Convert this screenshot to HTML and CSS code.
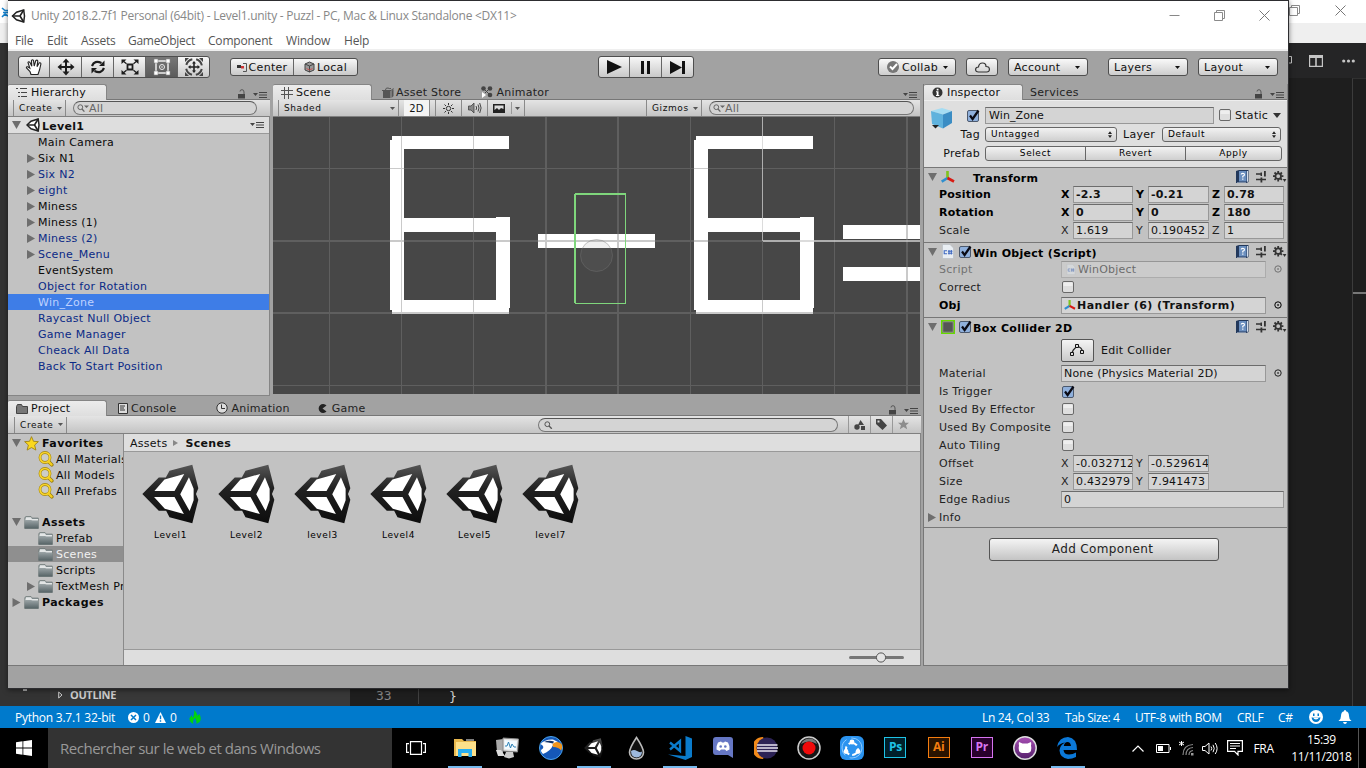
FILE: index.html
```html
<!DOCTYPE html>
<html lang="fr">
<head>
<meta charset="utf-8">
<title>Unity 2018.2.7f1 Personal (64bit) - Level1.unity</title>
<link rel="stylesheet" href="styles.css">
</head>
<body>
<svg class="defs" width="0" height="0">
  <defs>
    <linearGradient id="gDark" x1="0" y1="0" x2="0" y2="1"><stop offset="0" stop-color="#555"/><stop offset=".4" stop-color="#222"/><stop offset="1" stop-color="#0d0d0d"/></linearGradient>
    <linearGradient id="gFolder" x1="0" y1="0" x2="0" y2="1"><stop offset="0" stop-color="#9ba4a6"/><stop offset="1" stop-color="#566366"/></linearGradient>
    <linearGradient id="gGh" x1="0" y1="0" x2="0" y2="1"><stop offset="0" stop-color="#a84fb4"/><stop offset="1" stop-color="#54206b"/></linearGradient>
    <symbol id="unity" viewBox="36 192 170 178">
      <path fill="url(#gDark)" d="M37 281 86 232H107L118 212 186 194 204 264 197 281 204 298 186 368 118 350 108 331H86Z"/>
      <path fill="#fff" d="M73 272 103 238 162 221 133 272ZM72 290H133L161 341 104 325ZM176 231 190 265V300L178 332 150 282Z"/>
    </symbol>
    <symbol id="unityline" viewBox="0 0 14 14">
      <path fill="#fff" stroke="#222" stroke-width="1.5" d="M1 7 5 3.2 12.2 1 13 7 12.2 13 5 10.8Z"/>
      <path fill="none" stroke="#222" stroke-width="1.6" d="M1 7H8.5L12.2 1M8.5 7 12.2 13"/>
    </symbol>
    <symbol id="right" viewBox="0 0 8 9"><path fill="#6e6e6e" d="M0 0 8 4.5 0 9Z"/></symbol>
    <symbol id="down" viewBox="0 0 9 8"><path fill="#6e6e6e" d="M0 0H9L4.5 8Z"/></symbol>
    <symbol id="drop" viewBox="0 0 5 3"><path fill="currentColor" d="M0 0H5L2.5 3Z"/></symbol>
    <symbol id="menu" viewBox="0 0 14 7"><path fill="#444" d="M0 1H5L2.5 4ZM6 0H14V1H6ZM6 2.500H14V3.500H6ZM6 5H14V6H6Z"/></symbol>
    <symbol id="lock" viewBox="0 0 8 10"><path fill="#444" d="M0 5H7V9.500H0Z"/><path fill="none" stroke="#555" d="M2 2.500Q2 .7 4 .7T6 3V5"/></symbol>
    <symbol id="glass" viewBox="0 0 12 8"><circle cx="3.300" cy="3.200" r="2.400" fill="none" stroke="#666"/><path stroke="#666" stroke-width="1.300" d="M5 5 7.400 7.600"/><path fill="#666" d="M7 1.500H12L9.500 4Z"/></symbol>
    <symbol id="folder" viewBox="0 0 15 13"><path fill="#8d979a" stroke="#65706f" stroke-width=".6" d="M.8 3V1.500L2 .5H7L8 2H14.300V12.500H.8Z"/><path fill="#e3e6e6" d="M2 1.300H7L8 3H14V4.500H1.200Z"/><path fill="url(#gFolder)" d="M.5 4H7L8.500 5H14.500V12.500H.5Z"/></symbol>
    <symbol id="yglass" viewBox="0 0 16 16"><path fill="none" stroke="#94780c" stroke-width="3.600" stroke-linecap="round" d="M10.500 10.500 13.800 13.800"/><circle cx="7" cy="6.500" r="5" fill="#cdcdc6" stroke="#a4860e" stroke-width="2.800"/><circle cx="7" cy="6.500" r="5" fill="none" stroke="#f7d42c" stroke-width="1.700"/><path fill="none" stroke="#f5cf1e" stroke-width="2.200" stroke-linecap="round" d="M10.700 10.700 13.600 13.600"/></symbol>
    <symbol id="axes" viewBox="0 0 14 12"><path fill="none" stroke="#7fc41c" stroke-width="2.600" d="M6.500 0V7"/><path stroke="#2f8fcf" stroke-width="2.600" d="M6.500 7 .7 10.700"/><path stroke="#d81a12" stroke-width="2.600" d="M6.500 7 13 10.500"/></symbol>
    <symbol id="book" viewBox="0 0 13 13"><path fill="#23395c" d="M0 1 3 0H12.500V12L10.500 13H0Z"/><path fill="#6b8fbf" d="M3 1H10.500V11.500H3Z"/><path fill="#d5deea" d="M11 1H12V11.500L11 12ZM1 12H10V12.600H1Z"/><path fill="none" stroke="#fff" stroke-width="1.200" d="M5.200 4.600Q5.200 3.300 6.800 3.300T8.400 4.700Q8.400 5.600 6.800 6.200V7.400M6.800 8.500V9.700"/></symbol>
    <symbol id="sliders" viewBox="0 0 12 12"><path fill="#333" d="M1 2.300H7V3.700H1ZM1 7.800H11V9.200H1ZM5.500 6.500H7.300V11.500H5.500ZM5.500 1.500H7V5H5.500ZM9 0H10.800V5.500H9Z"/></symbol>
    <symbol id="gear" viewBox="0 0 14 12"><circle cx="5.200" cy="5.200" r="2.800" fill="none" stroke="#333" stroke-width="1.800"/><path stroke="#333" stroke-width="1.800" d="M5.200 0V2M5.200 8.400V10.400M0 5.200H2M8.400 5.200H10.400M1.500 1.500 3 3M7.400 7.400 8.900 8.900M8.900 1.500 7.400 3M3 7.400 1.500 8.900"/><path fill="#333" d="M9.800 8H13.400L11.600 11Z"/></symbol>
    <symbol id="check" viewBox="0 0 13 13"><rect x=".5" y="1.500" width="11" height="11" rx="1.500" fill="#8fb0dc" stroke="#4c596d"/><path fill="none" stroke="#0a0a14" stroke-width="2.200" d="M3 6.500 5.600 10 11.500 1.500"/></symbol>
    <symbol id="box" viewBox="0 0 13 13"><rect x=".5" y=".5" width="11" height="11" rx="1.500" fill="#dedede" stroke="#696969"/><path fill="#eee" d="M1.500 1.500H10.500V5H1.500Z"/></symbol>
    <symbol id="pick" viewBox="0 0 9 9"><circle cx="4" cy="4" r="3.200" fill="none" stroke="currentColor"/><path fill="currentColor" d="M3.300 3.300H4.800V4.800H3.300Z"/></symbol>
    <symbol id="script" viewBox="0 0 12 15"><path fill="#e9eef3" stroke="#b6bcc3" stroke-width=".6" d="M.5.5H8L11.500 4V14.500H.5Z"/><path fill="none" stroke="#3e68c0" stroke-width="1.100" d="M5 6.700H2.200V9.800H5M7 6V10.500M9.300 6V10.500M5.900 7.300H10.500M5.900 9.200H10.500"/></symbol>
    <symbol id="updn" viewBox="0 0 4 7"><path fill="#222" d="M0 3 2 .3 4 3ZM0 4.200H4L2 7Z"/></symbol>
    <symbol id="restore" viewBox="0 0 11 11"><path fill="none" stroke="#8a8a8a" d="M.5 2.500H8.500V10.500H.5ZM2.500 2.500V.5H10.500V8.500H8.500"/></symbol>
    <symbol id="close" viewBox="0 0 11 11"><path stroke="#777" d="M.5.5 10.500 10.500M10.500.5.5 10.500"/></symbol>
  </defs>
</svg>

<div class="desktop">
  <div class="vscode">
    <div class="vs-title"><svg class="vs-logo" width="8" height="11" viewBox="0 0 8 11"><path fill="none" stroke="#1583cf" stroke-width="1.600" d="M2 1 5 3.500H8M2 10 5 7 8 9M3 5.500H8"/></svg><svg width="11" height="11"><use href="#restore"/></svg><svg class="vs-close" width="11" height="11"><use href="#close"/></svg></div>
    <div class="vs-menu"></div>
    <div class="vs-body">
      <div class="vs-activity"><i></i></div>
      <div class="vs-side"><svg width="5" height="8" viewBox="0 0 5 8"><path fill="none" stroke="#ccc" d="M.7 1V7L4 4Z"/></svg><span>OUTLINE</span></div>
      <div class="vs-code"><span class="ln">33</span><span class="brace">}</span></div>
      <div class="vs-right"><div class="vs-actions">
        <svg width="7" height="14" viewBox="0 0 7 14"><path fill="none" stroke="#c5c5c5" d="M0 2.500H2.500V9H0"/></svg>
        <svg width="14" height="12" viewBox="0 0 14 12"><path fill="#c5c5c5" d="M0 0H14V12H0ZM1.200 3V10.800H6.200V3ZM7.800 3V10.800H12.800V3Z" fill-rule="evenodd"/></svg>
        <svg width="13" height="4" viewBox="0 0 13 4"><g fill="#c5c5c5"><circle cx="1.700" cy="2" r="1.600"/><circle cx="6.500" cy="2" r="1.600"/><circle cx="11.300" cy="2" r="1.600"/></g></svg>
      </div><div class="vs-map"><i></i></div></div>
    </div>
    <div class="vs-status">
      <span class="s1">Python 3.7.1 32-bit</span>
      <svg width="11" height="11" viewBox="0 0 11 11"><circle cx="5.500" cy="5.500" r="5.500" fill="#fff"/><path stroke="#007acc" stroke-width="1.500" d="M3 3 8 8M8 3 3 8"/></svg><span class="s2">0</span>
      <svg width="11" height="11" viewBox="0 0 11 11"><path fill="#fff" d="M5.500 0 11 11H0Z"/><path stroke="#007acc" stroke-width="1.400" d="M5.500 3.500V7.300M5.500 8.300V9.700"/></svg><span class="s3">0</span>
      <svg width="12" height="14" viewBox="0 0 12 14"><path fill="#00d50d" d="M5 0Q9 3 8 6L10.500 4Q13 9 10.500 12L7.500 14Q8 11 6 8Q3 11 4.500 14Q0 12 .5 8L3 5V8Q6 5 5 0Z"/></svg>
      <span class="s4">Ln 24, Col 33</span><span class="s5">Tab Size: 4</span><span class="s6">UTF-8 with BOM</span><span class="s7">CRLF</span><span class="s8">C#</span>
      <svg width="14" height="14" viewBox="0 0 14 14"><circle cx="7" cy="7" r="7" fill="#fff"/><path fill="#007acc" d="M4 3.500H5.500V6H4ZM8.500 3.500H10V6H8.500ZM2.500 7.500H11.500Q10.500 12 7 12T2.500 7.500Z"/><path fill="#fff" d="M4 7.400H10Q9 9.500 7 9.500T4 7.400Z"/></svg>
      <svg class="bell" width="14" height="14" viewBox="0 0 14 14"><path fill="#fff" d="M7 0Q8 0 8 1.300Q11 2 11 6Q11 9.500 13.500 11H.5Q3 9.500 3 6Q3 2 6 1.300Q6 0 7 0ZM5 12H9Q8.500 14 7 14T5 12Z"/></svg>
    </div>
  </div>

  <div class="taskbar">
    <div class="start"><svg width="16" height="16" viewBox="0 0 16 16"><path fill="#fff" d="M0 2.300 6.500 1.300V7.600H0ZM7.300 1.200 16 0V7.600H7.300ZM0 8.400H6.500V14.700L0 13.700ZM7.300 8.400H16V16L7.300 14.800Z"/></svg></div>
    <div class="tsearch">Rechercher sur le web et dans Windows</div>
    <div class="apps">
      <div class="app first"><svg width="20" height="14" viewBox="0 0 20 14"><path fill="none" stroke="#fff" stroke-width="1.200" d="M4.500.6H15.500V13.400H4.500ZM3 2.600H.6V11.400H3M17 2.600H19.400V11.400H17"/></svg></div>
      <div class="app on"><svg width="22" height="20" viewBox="0 0 22 20"><path fill="#e8b84e" d="M0 1H8L10 3H22V18H0Z"/><path fill="#fde08a" d="M2 4H22V18H2Z"/><path fill="#28aef0" d="M4 11H18V19H14.500V15H7.500V19H4Z"/><path fill="#fff" d="M12 1.500H20V2.500H12Z"/></svg></div>
      <div class="app"><svg width="24" height="22" viewBox="0 0 24 22"><path fill="#aaa" d="M0 3 7 2V16L1 15Z"/><path fill="#e4e4e4" stroke="#888" d="M7 1 22.500 2 21.500 15 7 14Z"/><path fill="#f3fbff" d="M8.500 3 21 4 20 13 8.500 12Z"/><path fill="none" stroke="#2f82b6" d="M9 9H11L12.500 5 14.500 11 16 7 18 10H20"/><path fill="#ccc" d="M10 15H17L18 20 13 21.500 8 20Z"/><path fill="#ddd" d="M0 13H5L9 19H2Z"/></svg></div>
      <div class="app"><svg width="24" height="24" viewBox="0 0 24 24"><circle cx="12" cy="12" r="11.500" fill="#1558b8" stroke="#4aa4ef"/><path fill="#fff" d="M1.500 8Q6 3 14 3.500L19 6Q15 7 13.500 10Q12 14.500 4 18Q1.500 15.500 2 14Q7 11 1.500 8Z"/><path fill="#0d2f66" d="M5 6Q10 4 15 5.500L14 7.500Q9 6 5 6Z"/><path fill="#f0951c" d="M13.500 8Q18 4 22.500 8Q24 11 22 14.500Q20 11 14 11Z"/></svg></div>
      <div class="app on"><svg width="19" height="20"><use href="#unity"/></svg></div>
      <div class="app"><svg width="17" height="24" viewBox="0 0 17 24"><path fill="#111" stroke="#bbb" stroke-width="1.600" d="M8.500 1.500Q15.500 12 15.500 16.500A7 6.500 0 0 1 1.500 16.500Q1.500 12 8.500 1.500Z"/><path fill="#9db9de" d="M3 15Q6 13 9 15T14 15.500Q14 21 8.500 21.500Q3 21 3 15Z"/></svg></div>
      <div class="app on"><svg width="24" height="24" viewBox="0 0 24 24"><path fill="#0a7bcb" d="M17.500 0 24 2.500V21L17.500 24 0 18.500 17.500 20Z"/><path fill="none" stroke="#0a7bcb" stroke-width="2.300" d="M2 6.500 12 15V5L2 13.500"/></svg></div>
      <div class="app"><svg width="20" height="21" viewBox="0 0 20 21"><path fill="#6677c4" d="M3 0H17Q20 0 20 3V21L15 18H3Q0 18 0 15V3Q0 0 3 0Z"/><path fill="#fff" d="M5 5.500 8 4.500 9 5.500H11L12 4.500 15 5.500Q17 9 16.500 12.500L13.500 14 12 12.500H8L6.500 14 3.500 12.500Q3 9 5 5.500Z"/><circle cx="7.700" cy="9.500" r="1.300" fill="#6677c4"/><circle cx="12.300" cy="9.500" r="1.300" fill="#6677c4"/></svg></div>
      <div class="app"><svg width="24" height="22" viewBox="0 0 24 22"><path fill="#f28a1a" d="M9 0A11 11 0 0 0 9 22L10 20A10 10 0 0 1 10 2Z"/><circle cx="13" cy="11" r="10.500" fill="#2c2255"/><path stroke="#e8e3f0" stroke-width="1.600" d="M3 8H23.500M3 11H24M3 14H23.500"/></svg></div>
      <div class="app"><svg width="24" height="24" viewBox="0 0 24 24"><circle cx="12" cy="12" r="11" fill="#161616" stroke="#ccc" stroke-width="1.500"/><path fill="#777" d="M4 8Q6 3 12 2.500T20 8Q12 3 4 8Z"/><circle cx="12" cy="12" r="6.500" fill="#f00a0a"/></svg></div>
      <div class="app"><svg width="24" height="24" viewBox="0 0 24 24"><rect width="24" height="24" rx="6" fill="#2a93ef"/><circle cx="12" cy="12" r="10" fill="none" stroke="#8fcbff" stroke-dasharray="18 5"/><circle cx="12" cy="13" r="6" fill="none" stroke="#fff" stroke-width="2" stroke-dasharray="9 3"/><g fill="#fff"><circle cx="12" cy="6" r="2.400"/><circle cx="6" cy="15.500" r="2.400"/><circle cx="18" cy="15.500" r="2.400"/></g></svg></div>
      <div class="app"><b class="adobe ps">Ps</b></div>
      <div class="app"><b class="adobe ai">Ai</b></div>
      <div class="app"><b class="adobe pr">Pr</b></div>
      <div class="app"><svg width="24" height="24" viewBox="0 0 24 24"><circle cx="12" cy="12" r="11.200" fill="url(#gGh)" stroke="#ddd" stroke-width="1.500"/><path fill="#fff" d="M6 6 9.500 7.500H14.500L18 6Q18.500 8 18 9.500Q19.500 16 15 17H9Q4.500 16 6 9.500Q5.500 8 6 6Z"/></svg></div>
      <div class="app on"><svg width="21" height="22" viewBox="0 0 21 22"><path fill="#0b78d7" d="M0 10Q2 0 11 0Q20 1 20 13H6.500Q7 17.500 12 17.500Q16 17.500 19 15.500V20Q15 22 11 22Q3 21 2.500 13.500Q3 8 8 5.500Q3 6 0 10ZM6.800 9H14Q13.500 5 10.500 5T6.800 9Z"/></svg></div>
    </div>
    <div class="tray">
      <svg width="12" height="7" viewBox="0 0 12 7"><path fill="none" stroke="#fff" stroke-width="1.200" d="M.5 6.500 6 1 11.500 6.500"/></svg>
      <svg width="15" height="9" viewBox="0 0 15 9"><path fill="none" stroke="#fff" d="M.5.5H13V8.500H.5ZM14.500 3V6"/><path fill="#fff" d="M2 2H7V7H2Z"/></svg>
      <svg width="15" height="15" viewBox="0 0 15 15"><path stroke="#fff" d="M2.500 0V5M0 1 5 4M5 1 0 4"/><g fill="none" stroke="#888" stroke-width="1.200"><path d="M4 14Q4 4 14 3.500M7 14Q7 7 14 6.500M10 14Q10 10 14 9.500"/></g><path fill="#999" d="M12 12H14.500V14.500H12Z"/></svg>
      <svg width="17" height="13" viewBox="0 0 17 13"><path fill="none" stroke="#fff" d="M.5 4.500H3L7 1V12L3 8.500H.5ZM9 4.500Q10.500 6.500 9 8.500M11 2.800Q13.500 6.500 11 10.200M13.200 1Q17 6.500 13.200 12"/></svg>
      <svg width="16" height="16" viewBox="0 0 16 16"><path fill="none" stroke="#fff" stroke-width="1.200" d="M.6.600H15.400V11.400H11V15L7.500 11.400H.6ZM3 3.500H13M3 6H13M3 8.500H9"/></svg>
      <span class="lang">FRA</span>
      <div class="clock"><span>15:39</span><span class="date">11/11/2018</span></div>
      <i class="peek"></i>
    </div>
  </div>

  <div class="unity">
    <div class="u-title"><svg width="15" height="14"><use href="#unityline"/></svg><span>Unity 2018.2.7f1 Personal (64bit) - Level1.unity - Puzzl - PC, Mac &amp; Linux Standalone &lt;DX11&gt;</span>
      <div class="winbtns"><svg width="11" height="11" viewBox="0 0 11 11"><path stroke="#888" d="M.5 5.500H10.500"/></svg><svg width="11" height="11"><use href="#restore"/></svg><svg width="11" height="11"><use href="#close"/></svg></div></div>
    <div class="u-menu"><span>File</span><span>Edit</span><span>Assets</span><span>GameObject</span><span>Component</span><span>Window</span><span>Help</span></div>

    <div class="u-tools">
      <div class="bgroup tools">
        <div><svg width="18" height="18" viewBox="0 0 18 18"><path fill="#fff" stroke="#222" stroke-width="1.100" d="M6 16.500 5 13.500 1.500 10Q1 8.500 2.700 8.700L4.800 10.200 3 4.500Q3.500 3 5 4.500L6.800 8.300 6.500 2.500Q7.500 1 8.500 2.500L9.200 8 10.800 2.500Q12.200 1.500 12.800 3L12 8.700 14.300 4.700Q15.800 4.500 15.900 6L14.500 12 13 16.500Z"/></svg></div>
        <div><svg width="18" height="18" viewBox="0 0 18 18"><path fill="#1c1c1c" d="M9 .5 12.500 4.500H10V8H13.500V5.500L17.500 9 13.500 12.500V10H10V13.500H12.500L9 17.500 5.500 13.500H8V10H4.500V12.500L.5 9 4.500 5.500V8H8V4.500H5.500Z"/></svg></div>
        <div><svg width="16" height="16" viewBox="0 0 16 16"><path fill="none" stroke="#1c1c1c" stroke-width="2.200" d="M2 7Q4.500 .8 11.500 4M14 9Q11.500 15.200 4.500 12"/><path fill="#1c1c1c" d="M14.500 1.500V7H9ZM1.500 14.500V9H7Z"/></svg></div>
        <div><svg width="18" height="16" viewBox="0 0 18 16"><path fill="none" stroke="#1c1c1c" stroke-width="1.800" d="M6.500 5.500H11.500V10.500H6.500Z"/><path stroke="#1c1c1c" stroke-width="1.300" d="M1.500 1.500 5.500 4.700M16.500 1.500 12.500 4.700M1.500 14.500 5.500 11.300M16.500 14.500 12.500 11.300"/><path fill="#1c1c1c" d="M.5.5H5.500L.5 5ZM17.500.5H12.500L17.500 5ZM.5 15.500H5.500L.5 11ZM17.500 15.500H12.500L17.500 11Z"/></svg></div>
        <div class="sel"><svg width="18" height="18" viewBox="0 0 18 18"><path fill="none" stroke="#eee" stroke-width="1.500" d="M3 3H15V15H3Z"/><path fill="#fff" stroke="#888" stroke-width=".6" d="M1 1H5V5H1ZM13 1H17V5H13ZM1 13H5V17H1ZM13 13H17V17H13Z"/><circle cx="9" cy="9" r="2.500" fill="none" stroke="#eee"/><circle cx="9" cy="9" r=".8" fill="#eee"/></svg></div>
        <div><svg width="20" height="20" viewBox="0 0 20 20"><circle cx="10" cy="10" r="8" fill="none" stroke="#444" stroke-width="2" stroke-dasharray="8.600 3.966" stroke-dashoffset="-2"/><path fill="#444" d="M1 1H5L1 5ZM19 1H15L19 5ZM1 19H5L1 15ZM19 19H15L19 15Z"/><path fill="#222" d="M10 4 12 6.500H10.800V9.200H13.500V8L16 10 13.500 12V10.800H10.800V13.500H12L10 16 8 13.500H9.200V10.800H6.500V12L4 10 6.500 8V9.200H9.200V6.500H8Z"/></svg></div>
      </div>
      <div class="bgroup pivot">
        <div><svg width="10" height="9" viewBox="0 0 10 9"><path fill="#333" d="M0 2H4V5H0Z"/><path fill="none" stroke="#555" d="M6 .5H9.500V8.500H6"/><path fill="#c33" d="M4 3H7V5.500H4Z"/></svg>Center</div>
        <div><svg width="11" height="12" viewBox="0 0 11 12"><path fill="#999" stroke="#444" d="M1 3 5.500 1 10 3V9L5.500 11 1 9Z"/><path fill="none" stroke="#444" d="M1 3 5.500 5 10 3M5.500 5V11"/><path fill="none" stroke="#c55" d="M2.500 7.500 5.500 9 8.500 7.500"/></svg>Local</div>
      </div>
      <div class="bgroup play">
        <div><svg width="15" height="14" viewBox="0 0 15 14"><path fill="#111" d="M0 0 15 7 0 14Z"/></svg></div>
        <div><svg width="9" height="13" viewBox="0 0 9 13"><path fill="#111" d="M0 0H3V13H0ZM6 0H9V13H6Z"/></svg></div>
        <div><svg width="15" height="13" viewBox="0 0 15 13"><path fill="#111" d="M0 0 12 6.500V0H15V13H12V6.500L0 13Z"/></svg></div>
      </div>
      <div class="rbtns">
        <div class="btn w77"><svg width="12" height="12" viewBox="0 0 12 12"><circle cx="6" cy="6" r="6" fill="#777"/><path fill="none" stroke="#fff" stroke-width="2" d="M3 5.500 5.500 8 10 3"/></svg>Collab<svg class="dd" width="5" height="3"><use href="#drop"/></svg></div>
        <div class="btn w31"><svg width="15" height="11" viewBox="0 0 15 11"><path fill="none" stroke="#333" stroke-width="1.200" d="M3.500 10Q.6 10 .6 7.500T3.500 5Q4 1 7.500 1T11 4.500Q14.400 4.500 14.400 7.300T11.500 10Z"/></svg></div>
        <div class="btn w79">Account<svg class="dd" width="5" height="3"><use href="#drop"/></svg></div>
        <div class="btn w79 gap">Layers<svg class="dd" width="5" height="3"><use href="#drop"/></svg></div>
        <div class="btn w79">Layout<svg class="dd" width="5" height="3"><use href="#drop"/></svg></div>
      </div>
    </div>

    <div class="work">
      <div class="leftcol">
        <div class="toprow">
          <section class="hier">
            <div class="tabs"><div class="tab act"><svg width="12" height="9" viewBox="0 0 12 9"><path stroke="#444" fill="none" d="M0 .5H2M4 .5H11M2 4.500H4M5 4.500H11M2 8.500H4M5 8.500H11"/></svg>Hierarchy</div><div class="tabend"><svg width="8" height="10"><use href="#lock"/></svg><svg width="14" height="7"><use href="#menu"/></svg></div></div>
            <div class="bar hbar"><div class="create">Create<svg width="5" height="3"><use href="#drop"/></svg></div><div class="search"><svg width="12" height="8"><use href="#glass"/></svg>All</div></div>
            <div class="tree">
              <div class="scenehd"><svg width="9" height="8"><use href="#down"/></svg><svg width="14" height="14"><use href="#unityline"/></svg><b>Level1</b><svg class="mr" width="14" height="7"><use href="#menu"/></svg></div>
              <div class="row"><i></i>Main Camera</div>
              <div class="row"><svg width="8" height="9"><use href="#right"/></svg>Six N1</div>
              <div class="row blue"><svg width="8" height="9"><use href="#right"/></svg>Six N2</div>
              <div class="row blue"><svg width="8" height="9"><use href="#right"/></svg>eight</div>
              <div class="row"><svg width="8" height="9"><use href="#right"/></svg>Miness</div>
              <div class="row"><svg width="8" height="9"><use href="#right"/></svg>Miness (1)</div>
              <div class="row blue"><svg width="8" height="9"><use href="#right"/></svg>Miness (2)</div>
              <div class="row blue"><svg width="8" height="9"><use href="#right"/></svg>Scene_Menu</div>
              <div class="row"><i></i>EventSystem</div>
              <div class="row blue"><i></i>Object for Rotation</div>
              <div class="row picked"><i></i>Win_Zone</div>
              <div class="row blue"><i></i>Raycast Null Object</div>
              <div class="row blue"><i></i>Game Manager</div>
              <div class="row blue"><i></i>Cheack All Data</div>
              <div class="row blue"><i></i>Back To Start Position</div>
            </div>
          </section>
          <section class="scene">
            <div class="tabs"><div class="tab act"><svg width="12" height="12" viewBox="0 0 12 12"><path stroke="#555" d="M3.500 0V12M7.500 0V12M0 3.500H12M0 7.500H12"/></svg>Scene</div>
              <div class="tab t-store"><svg width="12" height="11" viewBox="0 0 12 11"><path fill="#555" d="M1 4H8.500V11H1ZM9.500 4 11.500 2V9L9.500 11Z"/><path fill="none" stroke="#555" d="M3 4Q4 0 6 1T9 1.500M0 3.500H9L11.500 1.500"/></svg>Asset Store</div>
              <div class="tab t-anim"><svg width="12" height="12" viewBox="0 0 12 12"><g fill="#444"><circle cx="2.500" cy="2.500" r="2.300"/><circle cx="9" cy="2.500" r="2.300"/><circle cx="9" cy="9" r="2.300"/></g><path stroke="#444" d="M2 2 9 9M9 2 4 7"/><path fill="#fff" d="M1 6 5 9 1 12Z"/></svg>Animator</div>
              <div class="tabend"><svg width="14" height="7"><use href="#menu"/></svg></div></div>
            <div class="bar sbar">
              <div class="c-shade">Shaded<svg width="5" height="3"><use href="#drop"/></svg></div>
              <div class="c-2d">2D</div>
              <div class="c-ic"><svg width="11" height="11" viewBox="0 0 11 11"><circle cx="5.500" cy="5.500" r="2.200" fill="none" stroke="#333"/><path stroke="#333" d="M5.500 0V2M5.500 9V11M0 5.500H2M9 5.500H11M1.500 1.500 3 3M8 8 9.500 9.500M9.500 1.500 8 3M3 8 1.500 9.500"/></svg></div>
              <div class="c-ic"><svg width="14" height="12" viewBox="0 0 14 12"><path fill="#888" stroke="#444" stroke-width=".8" d="M.5 4H3L6 1V11L3 8H.5Z"/><path fill="none" stroke="#444" d="M8 4Q9.300 6 8 8M10 2.500Q12 6 10 9.500M11.700 1Q14.500 6 11.700 11"/></svg></div>
              <div class="c-pic"><svg width="12" height="9" viewBox="0 0 12 9"><rect width="12" height="9" fill="#222"/><path fill="#ddd" d="M1.500 1.500H10.500V5L8 4 6 6 4 4 1.500 6Z"/></svg><i></i><svg width="5" height="3"><use href="#drop"/></svg></div>
              <div class="c-giz">Gizmos<svg width="5" height="3"><use href="#drop"/></svg></div>
              <div class="search"><svg width="12" height="8"><use href="#glass"/></svg>All</div>
            </div>
            <svg class="view" width="647" height="277" viewBox="273 117 647 277" shape-rendering="crispEdges">
              <rect x="273" y="117" width="647" height="277" fill="#474747"/>
              <g fill="#fff">
                <path id="six" d="M392 136H509V149H404V218H496V217H510V308H509V314H392V310H390V140H392ZM404 232V300H496V232Z" fill-rule="evenodd"/>
                <use href="#six" x="304"/>
                <path d="M538 234H655V248H538ZM843 225H920V239H843ZM843 267H920V281H843Z"/>
              </g>
              <path fill="#808080" fill-opacity=".42" d="M329 117h1v277h-1ZM401 117h1v277h-1ZM473 117h1v277h-1ZM545 117h2v277h-2ZM617 117h2v277h-2ZM690 117h1v277h-1ZM762 241h1v153h-1ZM834 117h1v277h-1ZM906 117h2v277h-2ZM273 168h647v1h-647ZM273 240h489v2h-489ZM273 312h647v2h-647ZM273 385h647v1h-647Z"/>
              <path fill="#d0d0d0" fill-opacity=".75" d="M762 117h1v124h-1ZM763 240h157v2h-157Z"/>
              <path fill="none" stroke="#7fd67c" d="M575.500 194V303.500H625.500V194"/><path fill="#7fd67c" d="M575 193h51v2h-51ZM574 194h2v109h-2Z"/>
              <circle cx="596.500" cy="255.500" r="16" fill="#808080" fill-opacity=".12" stroke="#777" stroke-opacity=".4" shape-rendering="auto"/>
            </svg>
          </section>
        </div>

        <section class="proj">
          <div class="tabs"><div class="tab act"><svg width="12" height="10" viewBox="0 0 12 10"><path fill="#777" stroke="#444" d="M.5 2.500 1.500.5H5.500L6.500 2.500H11.500V9.500H.5Z"/></svg>Project</div>
            <div class="tab p2"><svg width="10" height="11" viewBox="0 0 10 11"><path fill="#ddd" stroke="#333" d="M.5.5H9.500V10.500H.5ZM2 3H7M2 5H6M2 7H7"/></svg>Console</div>
            <div class="tab p3"><svg width="12" height="12" viewBox="0 0 12 12"><circle cx="6" cy="6" r="5.200" fill="#ddd" stroke="#333"/><path fill="none" stroke="#333" d="M5.500 2.500V6.500H9"/></svg>Animation</div>
            <div class="tab p4"><svg width="9" height="9" viewBox="0 0 9 9"><path fill="#222" d="M8.500 1.500 4.500 4.500 8.500 7.500A4.500 4.500 0 1 1 8.500 1.500Z"/></svg>Game</div>
            <div class="tabend"><svg width="8" height="10"><use href="#lock"/></svg><svg width="14" height="7"><use href="#menu"/></svg></div></div>
          <div class="bar pbar"><div class="create">Create<svg width="5" height="3"><use href="#drop"/></svg></div><div class="search"><svg width="9" height="8" viewBox="0 0 9 8"><circle cx="3.300" cy="3.200" r="2.400" fill="none" stroke="#555"/><path stroke="#555" stroke-width="1.300" d="M5 5 7.800 7.800"/></svg></div>
            <div class="pi"><svg width="11" height="10" viewBox="0 0 11 10"><path fill="#444" d="M6.500 0 10 5H4ZM7 6H11V10H7Z"/><circle cx="3" cy="7" r="2.700" fill="#444"/></svg></div>
            <div class="pi"><svg width="11" height="11" viewBox="0 0 11 11"><path fill="#444" d="M0 0H5L11 6.500 6.500 11 0 5ZM1.500 1.500V3.500H3.500V1.500Z" fill-rule="evenodd"/></svg></div>
            <div class="pi"><svg width="11" height="11" viewBox="0 0 24 24"><path fill="#8d8d8d" d="M12 0 15.500 8H24L17.500 13.500 20 22.500 12 17.500 4 22.500 6.500 13.500 0 8H8.500Z"/></svg></div></div>
          <div class="pmain">
            <div class="ptree">
              <div class="prow l0"><svg width="9" height="8"><use href="#down"/></svg><svg width="15" height="15" viewBox="0 0 24 24"><path fill="#fbd81f" stroke="#a1861c" stroke-width="1.500" d="M12 1 15.200 8.500 23 9 17 14.500 19 22.500 12 18.500 5 22.500 7 14.500 1 9 8.800 8.500Z"/></svg><b>Favorites</b></div>
              <div class="prow l1"><svg width="16" height="16"><use href="#yglass"/></svg>All Materials</div>
              <div class="prow l1"><svg width="16" height="16"><use href="#yglass"/></svg>All Models</div>
              <div class="prow l1"><svg width="16" height="16"><use href="#yglass"/></svg>All Prefabs</div>
              <div class="spacer"></div>
              <div class="prow l0"><svg width="9" height="8"><use href="#down"/></svg><svg width="15" height="13"><use href="#folder"/></svg><b>Assets</b></div>
              <div class="prow l1"><svg width="15" height="13"><use href="#folder"/></svg>Prefab</div>
              <div class="prow l1 cur"><svg width="15" height="13"><use href="#folder"/></svg>Scenes</div>
              <div class="prow l1"><svg width="15" height="13"><use href="#folder"/></svg>Scripts</div>
              <div class="prow l1 arrow"><svg width="8" height="9"><use href="#right"/></svg><svg width="15" height="13"><use href="#folder"/></svg>TextMesh Pro</div>
              <div class="prow l0"><svg width="8" height="9"><use href="#right"/></svg><svg width="15" height="13"><use href="#folder"/></svg><b>Packages</b></div>
            </div>
            <div class="pfiles">
              <div class="crumb"><span>Assets</span><svg width="5" height="6" viewBox="0 0 5 6"><path fill="#888" d="M0 0 5 3 0 6Z"/></svg><b>Scenes</b></div>
              <div class="files">
                <div><svg width="57" height="60"><use href="#unity"/></svg><span>Level1</span></div>
                <div><svg width="57" height="60"><use href="#unity"/></svg><span>Level2</span></div>
                <div><svg width="57" height="60"><use href="#unity"/></svg><span>level3</span></div>
                <div><svg width="57" height="60"><use href="#unity"/></svg><span>Level4</span></div>
                <div><svg width="57" height="60"><use href="#unity"/></svg><span>Level5</span></div>
                <div><svg width="57" height="60"><use href="#unity"/></svg><span>level7</span></div>
              </div>
              <div class="pfoot"><svg width="55" height="11" viewBox="0 0 55 11"><rect y="4" width="55" height="3" rx="1.500" fill="#777"/><circle cx="32" cy="5.500" r="4.600" fill="#e4e4e4" stroke="#555"/></svg></div>
            </div>
          </div>
        </section>
      </div>

      <section class="insp">
        <div class="tabs"><div class="tab act"><svg width="11" height="11" viewBox="0 0 11 11"><circle cx="5.500" cy="5.500" r="5" fill="#333"/><path fill="#fff" d="M4.700 1.800H6.500V3.400H4.700ZM4 4.300H6.500V8H7.300V9H4V8H4.700V5.300H4Z"/></svg>Inspector</div><div class="tab i2">Services</div><div class="tabend"><svg width="8" height="10"><use href="#lock"/></svg><svg width="14" height="7"><use href="#menu"/></svg></div></div>
        <div class="ihead">
          <svg class="cube" width="23" height="21" viewBox="0 0 23 21"><path fill="#a5dcf2" d="M1 3 12 0 22 3 13 6.500Z"/><path fill="#5fb2dd" d="M1 3 13 6.500V20.500L2 16Z"/><path fill="#3b8dc4" d="M22 3V15L13 20.500V6.500Z"/><path fill="#222" d="M2 17H9L5.500 20.500Z"/></svg>
          <div class="ihrows">
            <div class="ih1"><svg width="13" height="13"><use href="#check"/></svg><div class="field">Win_Zone</div><svg width="13" height="13"><use href="#box"/></svg><span>Static</span><svg width="8" height="5" viewBox="0 0 8 5"><path fill="#333" d="M0 0H8L4 5Z"/></svg></div>
            <div class="ih2"><span class="lab">Tag</span><div class="popup wa">Untagged<svg width="4" height="7"><use href="#updn"/></svg></div><span class="lay">Layer</span><div class="popup wb">Default<svg width="4" height="7"><use href="#updn"/></svg></div></div>
            <div class="ih3"><span class="lab">Prefab</span><div class="seg"><span>Select</span><span>Revert</span><span>Apply</span></div></div>
          </div>
        </div>
        <div class="comp">
          <div class="ctitle"><svg width="9" height="8"><use href="#down"/></svg><svg class="ci" width="14" height="12"><use href="#axes"/></svg><i></i><b>Transform</b><svg class="bk" width="13" height="13"><use href="#book"/></svg><svg width="12" height="12"><use href="#sliders"/></svg><svg width="14" height="12"><use href="#gear"/></svg></div>
          <div class="frow bold"><label>Position</label><em>X</em><div class="field">-2.3</div><em>Y</em><div class="field">-0.21</div><em>Z</em><div class="field">0.78</div></div>
          <div class="frow bold"><label>Rotation</label><em>X</em><div class="field">0</div><em>Y</em><div class="field">0</div><em>Z</em><div class="field">180</div></div>
          <div class="frow"><label>Scale</label><em>X</em><div class="field">1.619</div><em>Y</em><div class="field">0.190452</div><em>Z</em><div class="field">1</div></div>
        </div>
        <div class="comp">
          <div class="ctitle"><svg width="9" height="8"><use href="#down"/></svg><svg class="ci" width="14" height="15"><use href="#script"/></svg><svg width="13" height="13"><use href="#check"/></svg><b>Win Object (Script)</b><svg class="bk" width="13" height="13"><use href="#book"/></svg><svg width="12" height="12"><use href="#sliders"/></svg><svg width="14" height="12"><use href="#gear"/></svg></div>
          <div class="orow dim"><label>Script</label><div class="field"><svg width="10" height="11"><use href="#script"/></svg>WinObject</div><svg width="9" height="9"><use href="#pick"/></svg></div>
          <div class="orow"><label>Correct</label><svg width="13" height="13"><use href="#box"/></svg></div>
          <div class="orow bold"><label>Obj</label><div class="field"><svg width="12" height="10"><use href="#axes"/></svg>Handler (6) (Transform)</div><svg width="9" height="9"><use href="#pick"/></svg></div>
        </div>
        <div class="comp last">
          <div class="ctitle"><svg width="9" height="8"><use href="#down"/></svg><svg class="ci" width="14" height="14" viewBox="0 0 14 14"><path fill="#555" stroke="#67d800" stroke-width="1.400" d="M.7.7H13.300V13.300H.7Z"/><path fill="none" stroke="#aaa" stroke-width=".7" d="M1.800 1.800H12.200V12.200H1.800Z"/></svg><svg width="13" height="13"><use href="#check"/></svg><b>Box Collider 2D</b><svg class="bk" width="13" height="13"><use href="#book"/></svg><svg width="12" height="12"><use href="#sliders"/></svg><svg width="14" height="12"><use href="#gear"/></svg></div>
          <div class="editrow"><div class="ebtn"><svg width="15" height="12" viewBox="0 0 15 12"><path fill="none" stroke="#222" stroke-width="1.200" d="M2 10Q2 6 7 2.500Q12 3 12.500 8"/><path fill="#ddd" stroke="#111" d="M.5 8.500H3.500V11.500H.5ZM5.500.5H8.500V3.500H5.500ZM10.500 6.500H13.500V9.500H10.500Z"/></svg></div>Edit Collider</div>
          <div class="orow"><label>Material</label><div class="field">None (Physics Material 2D)</div><svg width="9" height="9"><use href="#pick"/></svg></div>
          <div class="orow"><label>Is Trigger</label><svg width="13" height="13"><use href="#check"/></svg></div>
          <div class="orow"><label>Used By Effector</label><svg width="13" height="13"><use href="#box"/></svg></div>
          <div class="orow"><label>Used By Composite</label><svg width="13" height="13"><use href="#box"/></svg></div>
          <div class="orow"><label>Auto Tiling</label><svg width="13" height="13"><use href="#box"/></svg></div>
          <div class="frow"><label>Offset</label><em>X</em><div class="field">-0.032712</div><em>Y</em><div class="field">-0.529614</div></div>
          <div class="frow"><label>Size</label><em>X</em><div class="field">0.432979</div><em>Y</em><div class="field">7.941473</div></div>
          <div class="orow wide"><label>Edge Radius</label><div class="field">0</div></div>
          <div class="orow info"><svg width="8" height="9"><use href="#right"/></svg><span>Info</span></div>
        </div>
        <div class="addwrap"><div class="addbtn">Add Component</div></div>
      </section>
    </div>
    <div class="u-foot"></div>
  </div>
</div>
</body>
</html>
```
FILE: styles.css
```css
* { box-sizing: border-box; }
body { margin: 0; overflow: hidden; }
svg { display: block; flex: none; }
i, em { font-style: normal; }
.defs { position: absolute; }
.desktop { position: relative; width: 1366px; height: 768px; background: #1e1e1e; overflow: hidden; display: flex; flex-direction: column; font-family: "Open Sans", "Noto Sans", sans-serif; font-size: 12px; white-space: nowrap; }

/* editor window behind */
.vscode { height: 728px; display: flex; flex-direction: column; }
.vs-title { height: 23px; background: #fff; display: flex; align-items: center; padding-bottom: 3px; }
.vs-logo { margin: 4px 1281px 0 0; }
.vs-close { margin-left: 35px; }
.vs-menu { height: 20px; background: #efefef; }
.vs-body { flex: 1; display: flex; align-items: stretch; }
.vs-activity { width: 50px; background: #333; display: flex; align-items: flex-end; justify-content: center; padding-bottom: 15px; }
.vs-activity i { width: 4px; height: 2px; background: #aaa; }
.vs-side { width: 300px; background: #383838; color: #ccc; font-weight: 700; font-size: 11px; letter-spacing: -.35px; display: flex; align-items: flex-end; padding: 0 0 4px 8px; gap: 7px; }
.vs-side svg { margin-bottom: 3px; }
.vs-code { flex: 1; color: #858585; font: 13px "DejaVu Sans Mono", monospace; letter-spacing: -.1px; display: flex; align-items: flex-end; padding: 0 0 2px 26px; }
.vs-code .ln { width: 43px; height: 16px; border-right: 1px solid #404040; }
.vs-code .brace { color: #d4d4d4; padding-left: 30px; }
.vs-right { width: 77px; display: flex; flex-direction: column; }
.vs-actions { height: 35px; background: #252526; display: flex; align-items: center; gap: 13px; }
.vs-actions svg:nth-child(2) { margin-right: 6px; }
.vs-map { flex: 1; margin-left: 63px; border-left: 1px solid #3c3c3c; border-top: 1px solid #303030; padding-top: 213px; }
.vs-map i { display: block; height: 2px; background: #777; }
.vs-status { height: 22px; background: #007acc; color: #fff; display: flex; align-items: center; padding-left: 15px; letter-spacing: -.25px; }
.s1 { width: 113px; } .s2 { width: 16px; padding-left: 4px; } .s3 { width: 23px; padding-left: 4px; }
.s4 { margin-left: 781px; width: 83px; letter-spacing: -.3px; } .s5 { width: 70px; letter-spacing: -.4px; } .s6 { width: 102px; } .s7 { width: 41px; } .s8 { width: 31px; }
.bell { margin-left: 15px; }

/* taskbar */
.taskbar { height: 40px; background: #000; display: flex; color: #fff; }
.start { width: 48px; display: flex; align-items: center; justify-content: center; }
.tsearch { width: 344px; background: #333; color: #999; font-size: 15px; letter-spacing: -.48px; padding-left: 12px; line-height: 41px; }
.apps { display: flex; padding-left: 2px; }
.app { width: 43.100px; height: 40px; display: flex; align-items: center; justify-content: center; border-bottom: 1px solid transparent; }
.app.first { width: 49px; padding-right: 5px; }
.app.on { background: linear-gradient(#76b9ed, #76b9ed) center bottom / 34px 2px no-repeat; border-bottom: 0; }
.adobe { width: 22px; height: 21px; border: 1.500px solid; font: 700 12px/17px "Open Sans", sans-serif; text-align: center; letter-spacing: -.3px; }
.ps { color: #1ec3e6; background: #00202b; } .ai { color: #f57d0f; background: #2a1300; } .pr { color: #d674f0; background: #28002c; }
.tray { flex: 1; display: flex; align-items: center; padding-left: 43px; }
.tray > svg { margin-right: 10px; }
.tray svg:nth-of-type(1) { margin-right: 12px; }
.tray svg:nth-of-type(2), .tray svg:nth-of-type(3), .tray svg:nth-of-type(4) { margin-right: 8px; }
.lang { width: 38px; letter-spacing: -.3px; }
.clock { width: 60px; display: flex; flex-direction: column; align-items: center; line-height: 17px; letter-spacing: -.35px; padding-bottom: 1px; }
.peek { width: 1px; height: 40px; background: #555; margin-left: auto; margin-right: 7px; }

/* main window */
.unity { position: absolute; left: 8px; top: 0; width: 1281px; height: 689px; background: #a2a2a2; border: solid #2d2d30; border-width: 1px 1px 1px 0; display: flex; flex-direction: column; box-shadow: 0 1px 5px rgba(0,0,0,.5); font: 11px "DejaVu Sans", Verdana, sans-serif; letter-spacing: .28px; color: #111; overflow: hidden; }
.u-title { height: 30px; background: #fff; display: flex; align-items: center; color: #888; font: 12px "Open Sans", sans-serif; letter-spacing: -.26px; padding: 0 18px 1px 3px; }
.u-title > span { margin-left: 5px; }
.winbtns { margin-left: auto; display: flex; gap: 34px; }
.u-menu { height: 20px; background: #fff; border-bottom: 2px solid #efefef; display: flex; align-items: center; font: 12px "Open Sans", sans-serif; letter-spacing: -.2px; color: #555; padding-left: 7px; }
.u-menu span:nth-child(1) { width: 32px; } .u-menu span:nth-child(2) { width: 34px; } .u-menu span:nth-child(3) { width: 47px; } .u-menu span:nth-child(4) { width: 80px; letter-spacing: -.28px; } .u-menu span:nth-child(5) { width: 78px; } .u-menu span:nth-child(6) { width: 58px; }
.u-tools { height: 33px; display: flex; align-items: center; padding: 0 10px 1px; }
.bgroup { display: flex; border: 1px solid #4e4e4e; border-radius: 3px; background: linear-gradient(#f7f7f7, #c9c9c9); height: 22px; }
.bgroup > div { width: 32px; display: flex; align-items: center; justify-content: center; border-right: 1px solid #666; }
.bgroup > div:last-child { border: 0; }
.bgroup .sel { background: linear-gradient(#777, #5b5b5b); }
.tools { width: 192px; }
.tools > div { flex: 0 0 32px; }
.tools > div:first-child { flex-basis: 31px; }
.tools > div:last-child { flex-basis: 31px; }
.pivot { width: 128px; margin-left: 20px; height: 18px; }
.pivot > div { width: 64px; gap: 2px; letter-spacing: .3px; }
.play { margin-left: 240px; width: 96px; }
.rbtns { margin-left: auto; display: flex; gap: 11px; }
.btn { height: 18px; border: 1px solid #4e4e4e; border-radius: 3px; background: linear-gradient(#f9f9f9, #cdcdcd); display: flex; align-items: center; padding: 0 7px 0 5px; }
.btn > svg:first-child:not(.dd) { margin: 0 3px; }
.btn .dd { margin-left: auto; }
.w77 { width: 78px; } .w31 { width: 32px; } .w79 { width: 80px; }
.w31 { justify-content: center; padding: 0; }
.btn + .btn { margin-left: -1px; } .btn.gap { margin-left: 9px; }

.work { height: 582px; display: flex; gap: 2px; }
.leftcol { width: 913px; display: flex; flex-direction: column; }
.toprow { height: 312px; display: flex; gap: 3px; }
section { display: flex; flex-direction: column; }
.tabs { height: 16px; display: flex; border-bottom: 1px solid #777; }
.tab { display: flex; align-items: center; color: #222; letter-spacing: .2px; padding-top: 1px; }
.tab svg { margin-right: 3px; }
.tab.act { width: 99px; height: 16px; background: linear-gradient(#ececec, #dedede); border: 1px solid #858585; border-width: 1px 1px 0 0; border-radius: 2px 3px 0 0; padding: 0 0 0 8px; color: #111; }
.tabend { margin-left: auto; display: flex; align-items: flex-end; gap: 7px; padding: 0 3px 0 0; }
.bar { height: 17px; display: flex; align-items: center; background: linear-gradient(#e4e4e4, #c4c4c4); border-bottom: 1px solid #808080; font-size: 9px; letter-spacing: .6px; color: #111; }
.create { display: flex; align-items: center; height: 16px; width: 53px; margin-left: 5px; border: solid #8a8a8a; border-width: 0 1px; padding-left: 5px; gap: 4px; }
.bar svg[height="3"] { color: #555; }
.create svg { margin-left: auto; margin-right: 3px; }
.search { height: 14px; border: 1px solid #777; border-top-color: #555; border-radius: 7px; background: #d4d4d4; display: flex; align-items: center; padding-left: 3px; font-size: 11px; letter-spacing: .2px; color: #666; }
.hier { width: 262px; }
.hbar .search { width: 184px; margin-left: 7px; }
.tree { flex: 1; background: #c2c2c2; border: solid #858585; border-width: 0 1px 1px 0; }
.scenehd { height: 17px; background: #dedede; border-bottom: 1px solid #999; display: flex; align-items: center; padding-left: 4px; gap: 5px; }
.scenehd b { letter-spacing: .3px; margin-left: -3px; padding-top: 2px; }
.mr { margin-left: auto; margin-right: 5px; }
.row { height: 16px; display: flex; align-items: center; padding-left: 19px; gap: 3px; color: #0a0a0a; }
.row i { width: 8px; }
.row.blue { color: #0b2a86; }
.row.picked { background: #3e7de7; color: #bfd2ff; }

.scene { width: 647px; }
.t-store { margin-left: 10px; } .t-store svg { margin-right: 2px; } .t-anim { margin-left: 20px; }
.scene .tab { letter-spacing: .25px; }
.sbar > div:not(.search) { height: 16px; display: flex; align-items: center; justify-content: center; border-right: 1px solid #8a8a8a; }
.sbar .c-shade { width: 121px; margin-left: 5px; border-left: 1px solid #8a8a8a; padding: 0 3px 0 5px; }
.sbar .c-shade svg { margin-left: auto; }
.sbar .c-2d { width: 26px; margin-left: 5px; background: #f4f4f4; font-size: 10px; letter-spacing: .2px; }
.sbar .c-ic { width: 26px; }
.sbar .c-2d + .c-ic { margin-left: 5px; border-left: 1px solid #8a8a8a; width: 27px; }
.sbar .c-pic { width: 37px; gap: 3px; }
.sbar .c-pic i { width: 1px; height: 12px; background: #999; margin-left: 3px; }
.sbar .c-giz { width: 56px; margin-left: 121px; border-left: 1px solid #8a8a8a; padding: 0 3px 0 5px; }
.sbar .c-giz svg { margin-left: auto; }
.sbar .search { width: 205px; margin-left: 7px; }

.proj { flex: 1; margin-top: 4px; }
.proj .tab { letter-spacing: .25px; }
.p2 { margin-left: 11px; } .p3 { margin-left: 40px; } .p4 { margin-left: 28px; }
.p4 svg { margin-right: 5px; }
.pbar { height: 18px; }
.pbar .create { margin-left: 6px; }
.pbar .search { width: 300px; margin-left: 471px; padding-left: 5px; margin-right: 10px; }
.pi { width: 22px; height: 17px; border-left: 1px solid #999; display: flex; align-items: center; justify-content: center; }
.pmain { height: 232px; display: flex; background: #c2c2c2; border-bottom: 1px solid #777; border-right: 1px solid #858585; }
.ptree { width: 116px; border-right: 1px solid #8a8a8a; overflow: hidden; padding-top: 1px; }
.prow { height: 16px; display: flex; align-items: center; color: #0a0a0a; padding-left: 4px; }
.prow.l0 svg:first-child { width: 9px; margin-right: 3px; }
.prow svg { margin-right: 3px; } .prow.l0 b { letter-spacing: .45px; }
.prow.l1 { padding-left: 30px; } .prow.l1.arrow { padding-left: 19px; }
.prow svg[width="16"] { margin-right: 2px; }
.prow.cur { background: #8f8f8f; color: #f2f2f2; }
.spacer { height: 15px; }
.pfiles { flex: 1; display: flex; flex-direction: column; }
.crumb { height: 18px; background: #dedede; border-bottom: 1px solid #999; display: flex; align-items: center; padding: 1px 0 0 6px; }
.crumb svg { margin: 0 7px 0 6px; } .crumb b { letter-spacing: .3px; }
.files { flex: 1; display: flex; padding: 12px 0 0 8px; }
.files div { width: 76px; display: flex; flex-direction: column; align-items: center; font-size: 9px; letter-spacing: .6px; line-height: 11px; color: #000; gap: 6px; }
.files span { padding-left: 1px; }
.pfoot { height: 16px; background: #dedede; border-top: 1px solid #999; display: flex; align-items: center; justify-content: flex-end; padding-right: 16px; }

.insp { width: 365px; background: #c2c2c2; border-right: 1px solid #858585; border-bottom: 1px solid #777; border-left: 1px solid #777; }
.insp .tabs { background: #a2a2a2; }
.insp .tab.act svg { margin-right: 4px; }
.i2 { margin-left: 7px; letter-spacing: .3px; }
.ihead { height: 67px; background: #dfdfdf; border-top: 1px solid #eee; display: flex; padding-top: 5px; }
.cube { margin: 2px 0 0 6px; }
.ihrows { flex: 1; display: flex; flex-direction: column; }
.ihrows > div { display: flex; align-items: center; }
.ih1 { height: 18px; padding-left: 14px; }
.ih1 .field { width: 229px; margin: 0 5px; letter-spacing: .1px; padding-left: 3px; }
.ih1 span { margin: 0 5px 0 3px; width: 33px; }
.ih2 { height: 20px; } .ih3 { height: 18px; }
.ihrows .lab { flex: none; width: 32px; padding-right: 5px; display: flex; justify-content: flex-end; }
.popup, .seg { height: 15px; border: 1px solid #666; border-radius: 3px; background: linear-gradient(#f2f2f2, #cfcfcf); display: flex; align-items: center; font-size: 9px; letter-spacing: .6px; color: #000; }
.popup { padding: 0 4px 0 5px; justify-content: space-between; }
.wa { width: 132px; } .wb { width: 119px; }
.lay { margin: 0 7px 0 6px; width: 32px; }
.seg { width: 297px; }
.seg span { flex: 0 0 100px; text-align: center; border-right: 1px solid #666; line-height: 13px; }
.seg span:last-child { flex: 1; border: 0; }
.field { height: 17px; background: #d4d4d4; border: 1px solid #989898; border-top-color: #6c6c6c; padding-left: 2px; display: flex; align-items: center; overflow: hidden; color: #111; }
.comp { border-top: 1px solid #777; padding-bottom: 3px; }
.comp.last { padding-bottom: 1px; }
.ctitle { height: 17px; display: flex; align-items: center; padding-left: 4px; color: #000; }
.ctitle .ci { margin: 0 4px 0 4px; }
.ctitle i { width: 13px; }
.ctitle b { margin-left: 1px; flex: 1; letter-spacing: .28px; padding-top: 3px; }
.ctitle .bk { margin-right: 6px; } .ctitle .bk + svg { margin-right: 6px; }
.frow, .orow { height: 18px; display: flex; align-items: center; padding-left: 15px; color: #222; }
.frow label, .orow label { width: 122px; }
.orow label + svg { margin-left: 1px; }
.frow em { width: 12px; }
.frow .field { width: 60px; letter-spacing: .2px; }
.frow em:nth-of-type(n+2) { margin-left: 3px; }
.frow .field:nth-of-type(2) { width: 61px; }
.bold { font-weight: 700; color: #000; letter-spacing: .2px; }
.orow .field { width: 205px; margin-right: 8px; gap: 2px; letter-spacing: .2px; }
.orow.dim .field { padding-left: 4px; }
.orow.bold .field { letter-spacing: .48px; gap: 1px; }
.orow.wide .field { width: 223px; margin: 0; }
.dim { opacity: .5; }
.editrow { height: 29px; display: flex; align-items: center; padding: 1px 0 0 137px; gap: 7px; }
.ebtn { width: 33px; height: 23px; border: 1px solid #555; border-radius: 2px; background: linear-gradient(#f4f4f4, #cacaca); display: flex; align-items: center; justify-content: center; }
.info { padding-left: 4px; gap: 3px; }
.addwrap { border-top: 1px solid #777; padding: 10px 0 0 65px; }
.addbtn { width: 230px; height: 23px; border: 1px solid #555; border-radius: 3px; background: linear-gradient(#f4f4f4, #c4c4c4); display: flex; align-items: center; justify-content: center; padding: 0 3px 2px 0; font-size: 12px; letter-spacing: .36px; color: #222; }
.u-foot { flex: 1; background: #a2a2a2; }
```
